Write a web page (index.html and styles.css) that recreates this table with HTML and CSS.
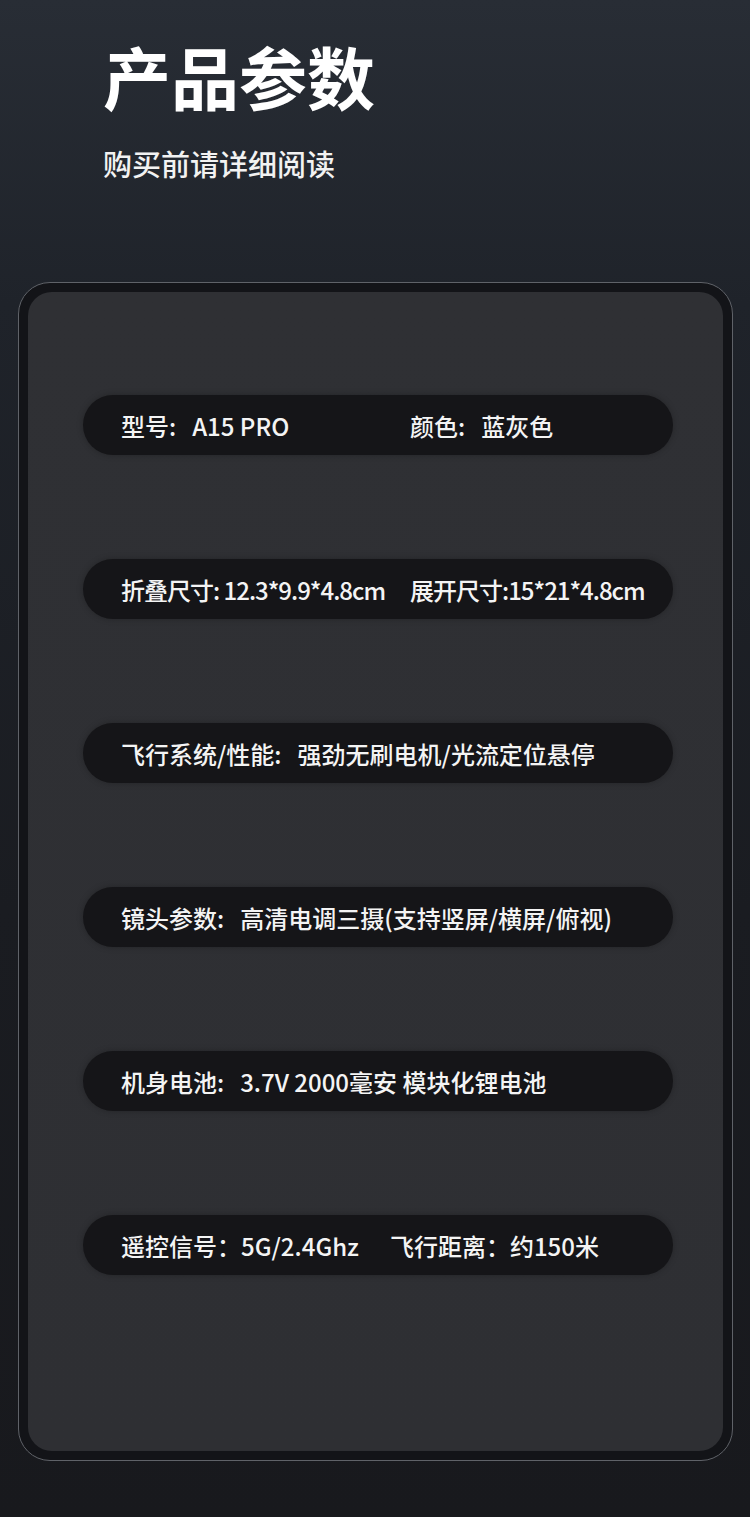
FILE: index.html
```html
<!doctype html>
<html lang="zh-CN">

<head>
    <meta charset="utf-8">
    <meta name="viewport" content="width=device-width, initial-scale=1, minimum-scale=1">
    <title>产品参数</title>
    <link rel="stylesheet" href="styles.css">
</head>

<body>
    <div class="header">
        <h1>产品参数</h1>
        <div class="sub-title">购买前请详细阅读</div>
    </div>

    <div class="frame">
        <div class="panel">
            <div class="row">
                <span class="col"><span class="k">型号:</span>A15 PRO</span>
                <span><span class="k">颜色:</span>蓝灰色</span>
            </div>
            <div class="row tight">
                <span class="col">折叠尺寸: 12.3*9.9*4.8cm</span>
                <span>展开尺寸:15*21*4.8cm</span>
            </div>
            <div class="row">
                <span><span class="k">飞行系统/性能:</span>强劲无刷电机/光流定位悬停</span>
            </div>
            <div class="row">
                <span><span class="k">镜头参数:</span>高清电调三摄(支持竖屏/横屏/俯视)</span>
            </div>
            <div class="row">
                <span><span class="k">机身电池:</span>3.7V 2000毫安 模块化锂电池</span>
            </div>
            <div class="row">
                <span class="gap">遥控信号：5G/2.4Ghz</span>
                <span>飞行距离：约150米</span>
            </div>
        </div>
    </div>
</body>

</html>
```

FILE: styles.css
```css
html,
body {
    margin: 0;
    padding: 0;
}

body {
    width: 750px;
    min-height: 1517px;
    font-family: "Noto Sans CJK SC", "Noto Sans", sans-serif;
    color: #fff;
    background: linear-gradient(180deg, #282d35 0%, #1f232a 20%, #1a1c21 60%, #18191d 100%);
    overflow: hidden;
}

.header {
    padding: 42px 0 0 103px;
}

h1 {
    margin: 0;
    font-size: 68px;
    line-height: 68px;
    font-weight: 700;
}

.sub-title {
    margin-top: 39px;
    font-size: 29px;
    line-height: 29px;
    font-weight: 500;
    color: #f2f2f2;
}

.frame {
    box-sizing: border-box;
    width: 715px;
    margin: 104px 0 0 18px;
    padding: 9px;
    border: 1.5px solid #5f6268;
    border-radius: 32px;
    background: #131418;
}

.panel {
    box-sizing: border-box;
    height: 1159px;
    padding: 103px 50px 0 55px;
    border-radius: 24px;
    background: linear-gradient(180deg, #2f3034 0%, #2e2f33 100%);
}

.row {
    display: flex;
    align-items: center;
    height: 60px;
    margin-bottom: 104px;
    padding-left: 38px;
    border-radius: 30px;
    background: #151518;
    box-shadow: 0 0 6px rgba(0, 0, 0, 0.25);
    font-size: 24px;
    font-weight: 500;
    color: #f4f4f4;
    white-space: nowrap;
}

.row.tight {
    letter-spacing: -1px;
}

.k {
    margin-right: 16px;
}

.col {
    width: 289px;
}

.gap {
    margin-right: 31px;
}
```
